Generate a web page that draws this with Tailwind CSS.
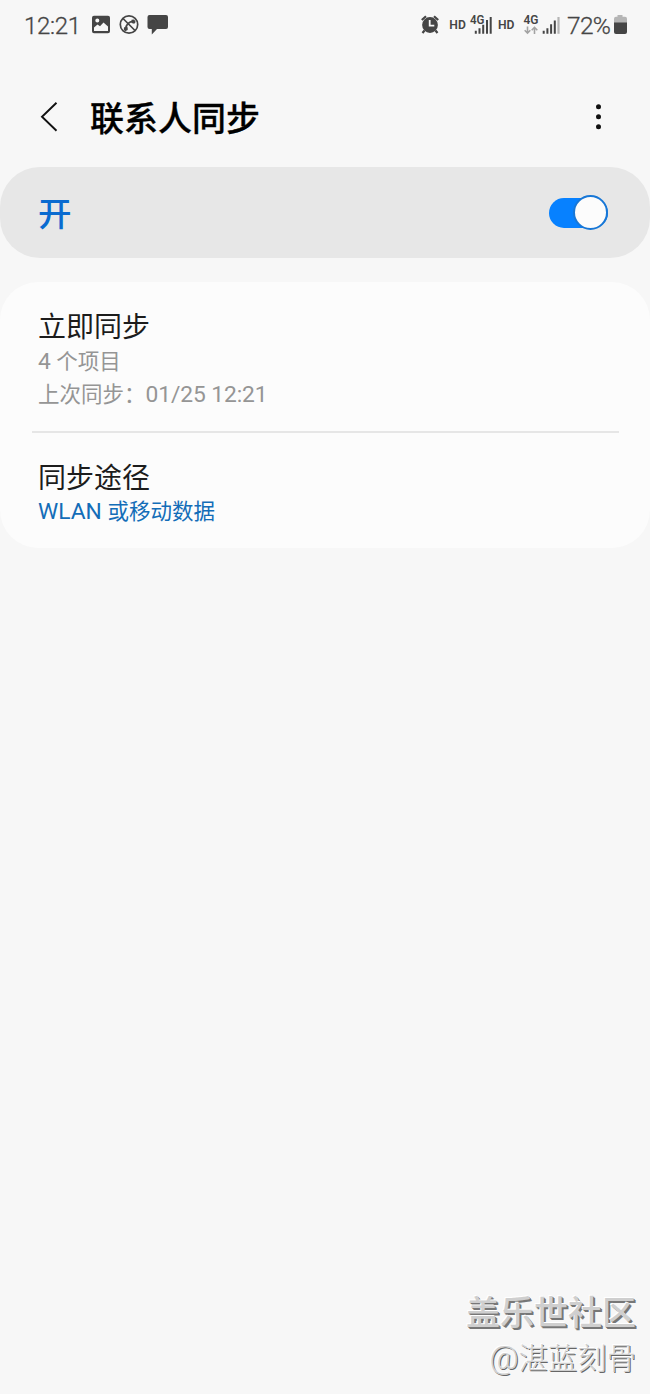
<!DOCTYPE html>
<html lang="zh-CN">
<head>
<meta charset="utf-8">
<title>联系人同步</title>
<script src="https://cdn.jsdelivr.net/npm/@tailwindcss/browser@4"></script>
</head>
<body class="bg-[#f7f7f7] font-['Roboto','Noto_Sans_CJK_SC',sans-serif]">
<div class="flex h-[1394px] w-[650px] flex-col overflow-hidden whitespace-nowrap">
  <header class="flex h-[50px] shrink-0 items-center pl-6 pr-[22px] text-[#454545]">
    <span class="w-[67px] pt-[2px] text-[24px] font-light leading-[50px] tracking-[-0.3px] [-webkit-text-stroke:0.3px_#454545]">12:21</span>
    <svg class="h-[50px] w-[80px]" viewBox="91 0 80 50" fill="#454545">
      <path fill-rule="evenodd" d="M94 15.800h14a2 2 0 0 1 2 2v13.500a2 2 0 0 1-2 2H94a2 2 0 0 1-2-2V17.800a2 2 0 0 1 2-2zM94 27.500v3.500h14v-4.500l-4.500-4-3.500 3.800-2.500-1.800zM97.300 18.600a2 2 0 1 0 0 4 2 2 0 0 0 0-4z"/>
      <circle cx="129" cy="24.500" r="8.700" fill="none" stroke="#454545" stroke-width="1.700"/>
      <path d="M123 18.500 135 30.500M125.700 29.500c.2-4.500 3-7.800 8-8.300" fill="none" stroke="#454545" stroke-width="1.700"/>
      <path d="M124 27.200h3.700v2.700l-2.500 1.400-1.400-1.600zM131.500 19.800l2.700-.2 1.500 2.300-1.500 1.900-2.700-.8z"/>
      <path d="M149.500 15h16.500a2 2 0 0 1 2 2v10a2 2 0 0 1-2 2h-9l-5.200 5.500V29h-2.300a2 2 0 0 1-2-2V17a2 2 0 0 1 2-2z"/>
    </svg>
    <svg class="ml-auto h-[50px] w-[146px]" viewBox="419 0 146 50" fill="#454545">
      <circle cx="430" cy="25" r="7.900"/>
      <path d="M424.500 30.500l-2 2.500M435.500 30.500l2 2.500M421.800 20l4.200-3.800M438.200 20l-4.200-3.800" stroke="#454545" stroke-width="2.200"/>
      <path d="M429.700 20v5.700h4.600" fill="none" stroke="#f7f7f7" stroke-width="1.800"/>
      <g font-family="Roboto" font-weight="600">
        <text x="449.300" y="28.500" font-size="12.500" textLength="16.500" lengthAdjust="spacingAndGlyphs">HD</text>
        <text x="470" y="24" font-size="12.500" textLength="14.500" lengthAdjust="spacingAndGlyphs">4G</text>
        <text x="498" y="28.500" font-size="12.500" textLength="16.500" lengthAdjust="spacingAndGlyphs">HD</text>
        <text x="523.500" y="24" font-size="12.500" textLength="15" lengthAdjust="spacingAndGlyphs">4G</text>
      </g>
      <path d="M475.800 33.800v-3M479.500 33.800v-5.500M483.200 33.800v-9M487 33.800V20M490.700 33.800V17M543.700 33.800v-3M547.400 33.800v-5.500M551.100 33.800v-9.500M554.800 33.800V20.500" stroke="#454545" stroke-width="2"/>
      <path d="M558.500 33.800V17" stroke="#b5b5b5" stroke-width="2.200"/>
      <path d="M527.500 26.500v6.500m-2.800-2.700 2.800 2.900 2.800-2.900M534.500 34v-6.500m-2.800 2.700 2.800-2.900 2.800 2.900" fill="none" stroke="#a3a3a3" stroke-width="1.600"/>
    </svg>
    <span class="ml-[2px] w-[46px] pt-[2px] text-[24.500px] font-light leading-[50px] tracking-[-0.7px] [-webkit-text-stroke:0.3px_#454545]">72%</span>
    <svg class="h-[50px] w-[15px]" viewBox="613 0 15 50">
      <path d="M617.500 15h5v1.800h2.500a2 2 0 0 1 2 2V24h-13v-5.200a2 2 0 0 1 2-2h1.500z" fill="#b5b5b5"/>
      <path d="M614 22.500h13V32a2 2 0 0 1-2 2h-9a2 2 0 0 1-2-2z" fill="#454545"/>
    </svg>
  </header>

  <div class="flex h-[117px] shrink-0 items-center pl-[38px] pr-[44px] pt-[17px]">
    <svg class="h-[32px] w-[52px]" viewBox="0 0 52 32" fill="none" stroke="#111" stroke-width="1.900"><path d="M18.500 1.800 4 15.700l14.500 14"/></svg>
    <h1 class="pt-[4px] text-[34px] font-medium leading-[50px] text-black [-webkit-text-stroke:0.3px_#000]">联系人同步</h1>
    <svg class="ml-auto h-[32px] w-[14px]" viewBox="0 0 14 32" fill="#111"><circle cx="6.500" cy="5.700" r="2.500"/><circle cx="6.500" cy="15.700" r="2.500"/><circle cx="6.500" cy="25.700" r="2.500"/></svg>
  </div>

  <div class="flex h-[91px] shrink-0 items-center justify-between rounded-[40px] bg-[#e7e7e7] pl-[38px] pr-[42px]">
    <span class="pt-[5px] text-[33.500px] font-medium leading-[50px] text-[#0a6bd0]">开</span>
    <div class="flex h-[30px] w-[59px] items-center justify-end rounded-full bg-[#0781ff]">
      <div class="-my-[3px] size-[35px] shrink-0 rounded-full border-2 border-[#1877d6] bg-[#fcfcfc]"></div>
    </div>
  </div>

  <main class="mt-[24px] h-[266px] shrink-0 rounded-[38px] bg-[#fcfcfc] pl-[32px] pr-[31px]">
    <section class="h-[151px] border-b-2 border-[#e6e6e6] pl-[6px] pt-[26px]">
      <h2 class="text-[28px] leading-[40px] text-[#1c1c1c]">立即同步</h2>
      <p class="-mt-[3px] h-[33px] text-[21.500px] leading-[33px] text-[#959595]"><span class="text-[22.800px]">4</span> 个项目</p>
      <p class="h-[33px] text-[21.500px] leading-[33px] text-[#959595]">上次同步：<span class="text-[22.800px] tracking-[-0.1px]">01/25 12:21</span></p>
    </section>
    <section class="pl-[6px] pt-[26px]">
      <h2 class="text-[28px] leading-[40px] text-[#1c1c1c]">同步途径</h2>
      <p class="-mt-[4px] h-[33px] text-[21.500px] leading-[33px] text-[#136db8]"><span class="text-[22.800px]">WLAN </span>或移动数据</p>
    </section>
  </main>

  <footer class="mb-[13px] mt-auto pr-[14px] text-right">
    <p class="text-[34px] font-medium leading-[46px] text-[#cfcfcf] [text-shadow:-1px_-1px_0_#fff,1px_1px_0_#777,2px_2px_0_#777]">盖乐世社区</p>
    <p class="-mt-px h-[46px] text-[29.300px] font-light leading-[46px] text-[#cfcfcf] [text-shadow:-1px_-1px_0_#fff,1px_1px_0_#666]"><span class="text-[32px]">@</span>湛蓝刻骨</p>
  </footer>
</div>
</body>
</html>
